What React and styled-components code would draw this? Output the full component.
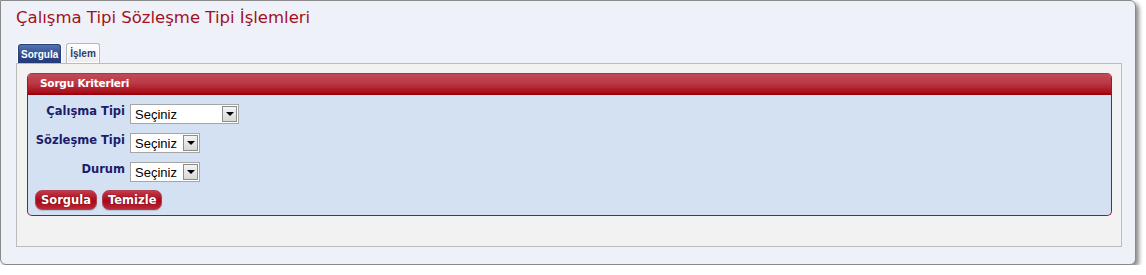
import React from "react";
import styled, { createGlobalStyle } from "styled-components";

const GlobalStyle = createGlobalStyle`
  html, body {
    margin: 0;
    padding: 0;
    background: #ffffff;
  }
  body {
    font-family: "DejaVu Sans", Verdana, sans-serif;
  }
`;

const Window = styled.div`
  width: 1134px;
  height: 263px;
  background: #eef2f8;
  border: 1px solid #8a8a8a;
  border-radius: 0 6px 6px 6px;
  box-shadow: 3px 3px 4px rgba(0, 0, 0, 0.45);
  box-sizing: content-box;
  display: flex;
  flex-direction: column;
`;

const Title = styled.h1`
  margin: 0;
  padding: 7px 0 0 15px;
  height: 34px;
  box-sizing: border-box;
  font-family: "DejaVu Sans", Verdana, sans-serif;
  font-weight: normal;
  font-size: 16.5px;
  color: #a3101e;
`;

const TabBar = styled.div`
  display: flex;
  align-items: flex-end;
  gap: 5px;
  padding-left: 17px;
  height: 28px;
`;

const Tab = styled.div`
  box-sizing: border-box;
  height: ${(p) => (p.active ? "19px" : "20px")};
  padding: 0 ${(p) => (p.active ? "2px" : "3px")};
  display: flex;
  align-items: center;
  font-family: "Liberation Sans", Arial, sans-serif;
  font-size: 10px;
  font-weight: bold;
  border-radius: 3px 3px 0 0;
  color: ${(p) => (p.active ? "#ffffff" : "#2b3d6b")};
  background: ${(p) =>
    p.active
      ? "linear-gradient(#5574b4, #2c4685 60%, #243c78)"
      : "linear-gradient(#ffffff, #ececec)"};
  border: 1px solid ${(p) => (p.active ? "#2a3f78" : "#b8b8b8")};
  border-bottom: none;
  box-shadow: ${(p) => (p.active ? "0 0 0 1px #ffffff" : "inset 0 0 0 1px #ffffff")};
`;

const TabBody = styled.div`
  margin-left: 15px;
  width: 1106px;
  height: 184px;
  box-sizing: border-box;
  background: #f2f2f2;
  border: 1px solid #bcbcbc;
  padding: 9px 0 0 10px;
`;

const Panel = styled.div`
  width: 1085px;
  height: 143px;
  box-sizing: border-box;
  display: flex;
  flex-direction: column;
  border: 1px solid #b0101e;
  border-top: none;
  border-radius: 5px;
  background: #d4e1f2;
  overflow: hidden;
`;

const PanelHeader = styled.div`
  height: 22px;
  box-sizing: border-box;
  background: linear-gradient(#b8101e 0px, #c14a56 1px, #bb3a47 10px, #a8101c 19px);
  border-bottom: 2px solid #a0000e;
  padding-left: 12px;
  display: flex;
  align-items: center;
  color: #ffffff;
  font-family: "DejaVu Sans", Verdana, sans-serif;
  font-size: 10.5px;
  font-weight: bold;
  letter-spacing: -0.2px;
`;

const PanelBody = styled.div`
  padding: 9px 0 0 0;
  display: flex;
  flex-direction: column;
`;

const FormGrid = styled.div`
  display: grid;
  grid-template-columns: 97px auto;
  column-gap: 5px;
  row-gap: 9px;
  justify-content: start;
`;

const Label = styled.label`
  text-align: right;
  font-family: "DejaVu Sans", Verdana, sans-serif;
  font-size: 11.5px;
  font-weight: bold;
  color: #1c1c6a;
  line-height: 14px;
  white-space: nowrap;
`;

const SelectBox = styled.div`
  display: flex;
  width: ${(p) => p.w}px;
  height: 20px;
  box-sizing: border-box;
  border: 1px solid #a6a6a6;
  background: #ffffff;
  select {
    flex: 1;
    min-width: 0;
    appearance: none;
    -webkit-appearance: none;
    border: none;
    outline: none;
    background: transparent;
    padding: 0 0 0 4px;
    font-family: "Liberation Sans", Arial, sans-serif;
    font-size: 13px;
    color: #000000;
    height: 18px;
  }
`;

const Arrow = styled.div`
  width: 15px;
  margin: 1px;
  box-sizing: border-box;
  border: 1px solid #8c8c8c;
  background: linear-gradient(#f4f4f4, #d8d8d8);
  display: flex;
  align-items: center;
  justify-content: center;
  &::after {
    content: "";
    border-left: 4px solid transparent;
    border-right: 4px solid transparent;
    border-top: 4px solid #000000;
  }
`;

const ButtonRow = styled.div`
  display: flex;
  gap: 5px;
  padding: 8px 0 0 7px;
`;

const Button = styled.button`
  height: 20px;
  padding: 0 5px;
  border: 1px solid #b04050;
  border-radius: 7px;
  background: linear-gradient(#c43848, #a80818 55%, #b82838);
  color: #ffffff;
  font-family: "DejaVu Sans", Verdana, sans-serif;
  font-size: 11.5px;
  font-weight: bold;
  text-shadow: 0 0 1px #600000;
  cursor: pointer;
  box-shadow: 0 1px 1px rgba(0, 0, 0, 0.15);
`;

const fields = [
  { label: "Çalışma Tipi", width: 109 },
  { label: "Sözleşme Tipi", width: 70 },
  { label: "Durum", width: 70 },
];

function App() {
  return (
    <>
      <GlobalStyle />
      <Window>
        <Title>Çalışma Tipi Sözleşme Tipi İşlemleri</Title>
        <TabBar>
          <Tab active>Sorgula</Tab>
          <Tab>İşlem</Tab>
        </TabBar>
        <TabBody>
          <Panel>
            <PanelHeader>Sorgu Kriterleri</PanelHeader>
            <PanelBody>
              <FormGrid>
                {fields.map(({ label, width }, idx) => (
                  <React.Fragment key={idx}>
                    <Label>{label}</Label>
                    <SelectBox w={width}>
                      <select defaultValue="">
                        <option value="">Seçiniz</option>
                      </select>
                      <Arrow />
                    </SelectBox>
                  </React.Fragment>
                ))}
              </FormGrid>
              <ButtonRow>
                <Button>Sorgula</Button>
                <Button>Temizle</Button>
              </ButtonRow>
            </PanelBody>
          </Panel>
        </TabBody>
      </Window>
    </>
  );
}

export default App;
